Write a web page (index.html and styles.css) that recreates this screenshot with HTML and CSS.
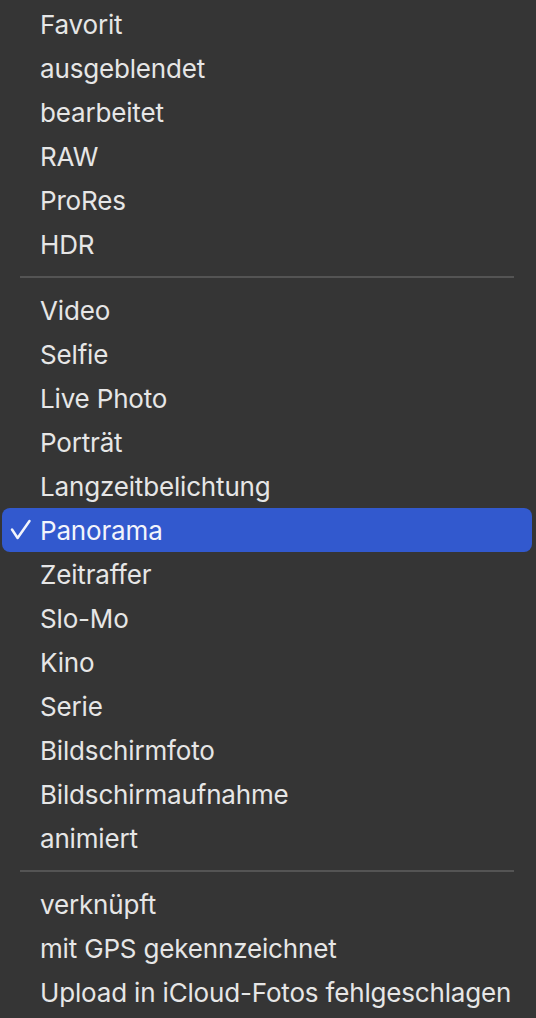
FILE: index.html
```html
<!DOCTYPE html>
<html lang="de">
<head>
<meta charset="utf-8">
<title>Menü</title>
<link rel="stylesheet" href="styles.css">
</head>
<body>
<div class="menu">
  <div class="item"><span class="label">Favorit</span></div>
  <div class="item"><span class="label">ausgeblendet</span></div>
  <div class="item"><span class="label">bearbeitet</span></div>
  <div class="item"><span class="label">RAW</span></div>
  <div class="item"><span class="label">ProRes</span></div>
  <div class="item"><span class="label">HDR</span></div>
  <div class="sep"></div>
  <div class="item"><span class="label">Video</span></div>
  <div class="item"><span class="label">Selfie</span></div>
  <div class="item"><span class="label">Live Photo</span></div>
  <div class="item"><span class="label">Porträt</span></div>
  <div class="item"><span class="label">Langzeitbelichtung</span></div>
  <div class="item selected">
    <svg class="check" width="22" height="22" viewBox="0 0 22 22"><path d="M2 10.5 L7.6 19 L19.5 2" fill="none" stroke="currentColor" stroke-width="2.5" stroke-linecap="round" stroke-linejoin="round"/></svg>
    <span class="label">Panorama</span>
  </div>
  <div class="item"><span class="label">Zeitraffer</span></div>
  <div class="item"><span class="label">Slo-Mo</span></div>
  <div class="item"><span class="label">Kino</span></div>
  <div class="item"><span class="label">Serie</span></div>
  <div class="item"><span class="label">Bildschirmfoto</span></div>
  <div class="item"><span class="label">Bildschirmaufnahme</span></div>
  <div class="item"><span class="label">animiert</span></div>
  <div class="sep"></div>
  <div class="item"><span class="label">verknüpft</span></div>
  <div class="item"><span class="label">mit GPS gekennzeichnet</span></div>
  <div class="item"><span class="label">Upload in iCloud-Fotos fehlgeschlagen</span></div>
</div>
</body>
</html>
```
FILE: styles.css
```css
html, body {
  margin: 0;
  padding: 0;
  background: #353535;
}
body {
  font-family: Inter, "Noto Sans", "Liberation Sans", sans-serif;
  color: #e6e6e6;
  -webkit-font-smoothing: antialiased;
}
.menu {
  display: flex;
  flex-direction: column;
  padding: 2px 4px 0 2px;
}
.item {
  position: relative;
  height: 44px;
  display: flex;
  align-items: center;
  padding-left: 38px;
  border-radius: 8px;
  font-size: 26px;
  letter-spacing: -0.17px;
}
.item.selected {
  background: #3259ce;
  color: #f2f4fb;
}
.check {
  position: absolute;
  left: 8px;
  top: 11px;
}
.sep {
  height: 2px;
  margin: 10px 18px 10px 18px;
  background: #545454;
}
```
